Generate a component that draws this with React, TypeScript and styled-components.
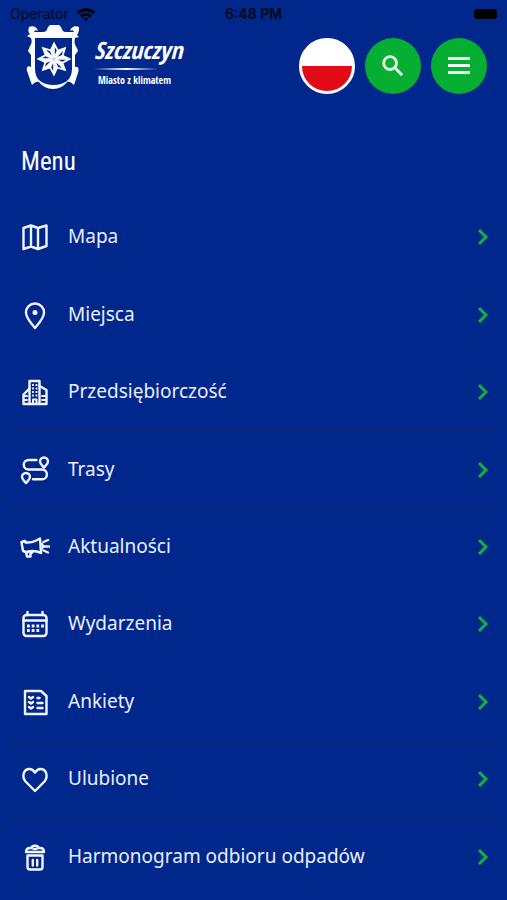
import React from "react";
import styled, { createGlobalStyle } from "styled-components";

const colors = {
  page: "#00278b",
  line: "#0e2570",
  green: "#06ae32",
  arrow: "#12b044",
  red: "#e30a17",
  text: "#e9eeff",
};

const GlobalStyle = createGlobalStyle`
  *, *::before, *::after { box-sizing: border-box; }
  body {
    margin: 0;
    background: ${colors.page};
    color: ${colors.text};
    font-family: "Noto Sans", sans-serif;
    overflow-x: hidden;
  }
`;

const Page = styled.div`
  display: flex;
  flex-direction: column;
`;

const StatusBar = styled.div`
  display: grid;
  grid-template-columns: 1fr auto 1fr;
  align-items: center;
  height: 24px;
  padding: 4px 10px 0;
  color: #020717;
  font: 400 14px/20px Inter, sans-serif;
`;

const Carrier = styled.div`
  display: flex;
  align-items: center;
  gap: 8px;
`;

const Clock = styled.time`
  font-weight: 600;
`;

const Battery = styled.span`
  justify-self: end;
  width: 23px;
  height: 10px;
  border-radius: 3px;
  background: #000;
`;

const Header = styled.header`
  display: flex;
  justify-content: space-between;
  align-items: flex-start;
  padding: 0 20px 0 26px;
`;

const Logo = styled.a`
  display: flex;
  gap: 12px;
  color: #fff;
  text-decoration: none;
`;

const LogoWords = styled.span`
  display: flex;
  flex-direction: column;
  padding-top: 8px;
`;

const LogoName = styled.span`
  font: italic 700 24px/36px "Open Sans Condensed", "Roboto Condensed", sans-serif;
`;

const LogoRule = styled.span`
  height: 2px;
  width: 64px;
  background: linear-gradient(90deg, transparent, #fff 50%, transparent);
`;

const LogoTagline = styled.span`
  padding-left: 4px;
  font: 700 10px/20px "Open Sans Condensed", "Roboto Condensed", sans-serif;
`;

const Actions = styled.div`
  display: flex;
  gap: 10px;
  padding-top: 14px;
`;

const RoundButton = styled.button`
  display: grid;
  place-items: center;
  width: 56px;
  height: 56px;
  padding: 0;
  border: 0;
  border-radius: 50%;
  background: ${colors.green};
  color: #effff2;
  cursor: pointer;
`;

const FlagButton = styled(RoundButton)`
  border: 3px solid #fff;
  background: linear-gradient(#fff 50%, ${colors.red} 50%);
`;

const Title = styled.h1`
  margin: 48px 0 0;
  padding: 0 21px;
  color: #fff;
  font: 400 25px/40px "Roboto Condensed", Roboto, sans-serif;
`;

const MenuList = styled.ul`
  display: grid;
  grid-auto-rows: 1fr;
  min-height: 697px;
  margin: 17px 12px 0;
  padding: 0;
  list-style: none;
`;

const MenuItem = styled.li`
  display: flex;
  border-bottom: 1px solid ${colors.line};
`;

const MenuLink = styled.a`
  flex: 1;
  display: flex;
  align-items: center;
  gap: 18px;
  padding: 0 6px 0 8px;
  color: inherit;
  font-size: 19px;
  line-height: 28px;
  text-decoration: none;
`;

const Label = styled.span`
  flex: 1;
  padding-bottom: 2px;
`;

const LineIcon = styled.svg`
  flex: none;
  fill: none;
  stroke: #f2f5ff;
  stroke-width: 2.4;
  stroke-linecap: round;
  stroke-linejoin: round;
`;

const Arrow = styled(LineIcon)`
  stroke: ${colors.arrow};
  stroke-width: 3;
  stroke-linecap: butt;
  stroke-linejoin: miter;
`;

const items: { label: string; icon: React.ReactNode }[] = [
  {
    label: "Mapa",
    icon: <path d="M3.5 6 11 3.500l7 2.500 8.500-2.500v20.500L18 27l-7-2.500L3.500 27zM11 3.500v21M18 6v21" />,
  },
  {
    label: "Miejsca",
    icon: (
      <>
        <path d="M15 28C12 24 6 18.500 6 12.500a9 9 0 0 1 18 0C24 18.500 18 24 15 28z" />
        <circle cx="15" cy="12.500" r="1.300" fill="#f2f5ff" />
      </>
    ),
  },
  {
    label: "Przedsiębiorczość",
    icon: (
      <>
        <path d="M3.500 27V17.500l6-6V4h10v5l7 4v14z" />
        <path d="M9.500 11v16M19.500 9v18" />
        <path d="M13 27v-4.500h3.500V27" strokeWidth="2" />
        <path d="M13 7v13M16.500 7v13" strokeDasharray="2 1.500" strokeLinecap="butt" strokeWidth="1.800" />
        <path d="M4 19h3M4 23h3M22 19h4M22 23h4" strokeWidth="1.800" />
      </>
    ),
  },
  {
    label: "Trasy",
    icon: (
      <>
        <path d="M16.500 5H8.500a4.750 4.750 0 0 0 0 9.500H22a4.900 4.900 0 0 1 0 9.800H13" />
        <path d="M24 12.500c-1.500-2-4-3.500-4-6a4 4 0 0 1 8 0c0 2.500-2.500 4-4 6z" />
        <path d="M6 28c-1.500-2-4-3.500-4-6a4 4 0 0 1 8 0c0 2.500-2.500 4-4 6z" />
      </>
    ),
  },
  {
    label: "Aktualności",
    icon: (
      <>
        <path d="M1.500 10 5 9l.5 1.500C12 11 16 9 20 6.500l1 14.500c-4-2-8-2.500-13-1.500l-.5 1L3 19z" />
        <path d="m6 20 1 4.500h3.500V19.500M10.500 22l2-2M22 12l1 2.500-1 2M23.500 10l4.500-2M24 14.500h5M23.500 18.500l4.500 2" />
      </>
    ),
  },
  {
    label: "Wydarzenia",
    icon: (
      <>
        <rect x="3.500" y="6" width="23" height="21" rx="3" />
        <path d="M3.500 11.500h23M7.500 3v3M22.500 3v3" />
        <path d="M7 17h17M7 21.500h13" strokeWidth="2.800" strokeDasharray="2.800 1.900" strokeLinecap="butt" />
      </>
    ),
  },
  {
    label: "Ankiety",
    icon: (
      <>
        <path d="M5 4h16l5.500 5v18H5z" />
        <path d="m9 10 2 1.500 2-1.500M9 15l2 1.500 2-1.500M9 20l2 1.500 2-1.500M17.500 11h2M17.500 16h5M17.500 21h5" />
      </>
    ),
  },
  {
    label: "Ulubione",
    icon: <path d="M15 27 5.500 17.500C1.500 12.500 3.500 5 9.500 5c3 0 4.500 2 5.500 3.500C16 7 17.500 5 20.500 5c6 0 8 7.500 4 12.500z" />,
  },
  {
    label: "Harmonogram odbioru odpadów",
    icon: (
      <>
        <path d="M6 10c0-3 1.500-4 4-4h1.500c.5-3 6.500-3 7 0H20c2.500 0 4 1 4 4zM7.500 13.500h15V25a2.500 2.500 0 0 1-2.500 2.500H10A2.500 2.500 0 0 1 7.500 25z" />
        <path d="M12.800 18v5.500M17.200 18v5.500M13.500 7h3" />
      </>
    ),
  },
];

function Crest() {
  return (
    <svg width="56" height="66" viewBox="0 0 56 66" aria-hidden="true">
      <path
        fill="#fff"
        fillRule="evenodd"
        d="M3 3c4-2 8 0 9 4-2-1-3-1-4 1h9c3 0 4-2 5-5l2-2h9l2 2c1 3 2 5 5 5h8c-1-2-2-2-4-1 1-4 5-6 9-4 0 3 0 5-2 8l2 2-4 1c-1 5 0 7 2 10l1 3-3 4v12c4-1 4 3 3 6l-4 12c-3-3-5-4-7-3-3 4-8 7-14 7S16 62 13 58c-2-1-4 0-7 3L1 47c-1-4 1-6 4-4V31l-3-4 2-5c2-3 2-5 1-8l-4-2 3-2C2 8 2 6 3 3zM9 14v31c0 11 8 16 18.500 16S46 56 46 45V14z"
      />
      <g fill="#fff" transform="translate(28 35)">
        {[0, 45, 90, 135, 180, 225, 270, 315].map((angle) => (
          <path
            key={angle}
            transform={`rotate(${angle})`}
            fillRule="evenodd"
            d="M0-17.500 4.500-9 0 0-4-9zM.8-12V-4L2.800-8.500z"
          />
        ))}
      </g>
    </svg>
  );
}

export default function App() {
  return (
    <Page>
      <GlobalStyle />
      <StatusBar>
        <Carrier>
          Operator
          <svg width="18" height="13" viewBox="0 0 18 13" fill="none" stroke="#000" strokeWidth="3" aria-hidden="true">
            <path d="M1 5c4.500-4.300 11.500-4.300 16 0M4 8.500c3-2.700 7-2.700 10 0" />
            <path d="m6.500 10.300 2.500 2.700 2.500-2.700c-1.500-1.200-3.500-1.200-5 0z" fill="#000" stroke="none" />
          </svg>
        </Carrier>
        <Clock>6:48 PM</Clock>
        <Battery />
      </StatusBar>
      <Header>
        <Logo href="#">
          <Crest />
          <LogoWords>
            <LogoName>Szczuczyn</LogoName>
            <LogoRule />
            <LogoTagline>Miasto z klimatem</LogoTagline>
          </LogoWords>
        </Logo>
        <Actions>
          <FlagButton type="button" aria-label="Język polski" />
          <RoundButton type="button" aria-label="Szukaj">
            <svg
              width="28"
              height="28"
              viewBox="0 0 24 24"
              fill="currentColor"
              stroke="currentColor"
              strokeWidth=".4"
              aria-hidden="true"
            >
              <path d="M15.500 14h-.79l-.28-.27A6.470 6.470 0 0 0 16 9.500 6.500 6.500 0 1 0 9.500 16c1.610 0 3.090-.59 4.230-1.570l.27.28v.79l5 4.990L20.490 19l-4.990-5zm-6 0C7.010 14 5 11.990 5 9.500S7.010 5 9.500 5 14 7.010 14 9.500 11.990 14 9.500 14z" />
            </svg>
          </RoundButton>
          <RoundButton type="button" aria-label="Menu">
            <svg width="24" height="18" viewBox="0 0 24 18" fill="currentColor" aria-hidden="true">
              <path d="M1 0h22v3H1zM1 7h22v3H1zM1 14h22v3H1z" />
            </svg>
          </RoundButton>
        </Actions>
      </Header>
      <main>
        <Title>Menu</Title>
        <nav aria-label="Menu">
          <MenuList>
            {items.map(({ label, icon }) => (
              <MenuItem key={label}>
                <MenuLink href="#">
                  <LineIcon width="30" height="30" viewBox="0 0 30 30" aria-hidden="true">
                    {icon}
                  </LineIcon>
                  <Label>{label}</Label>
                  <Arrow width="12" height="18" viewBox="0 0 12 18" aria-hidden="true">
                    <path d="m2 2 7 7-7 7" />
                  </Arrow>
                </MenuLink>
              </MenuItem>
            ))}
          </MenuList>
        </nav>
      </main>
    </Page>
  );
}
